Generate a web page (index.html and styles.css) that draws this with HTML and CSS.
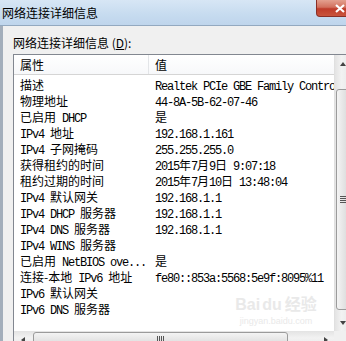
FILE: index.html
```html
<!DOCTYPE html>
<html lang="zh-CN">
<head>
  <meta charset="UTF-8">
  <title>网络连接详细信息</title>
  <link rel="stylesheet" href="styles.css">
</head>
<body>
  <div class="window">
    <div class="titlebar">
      <span class="title">网络连接详细信息</span>
      <div class="close">
        <svg width="10" height="9" viewBox="0 0 10 9"><path d="M1 1 L9 8 M9 1 L1 8" stroke="#fff" stroke-width="2.2"/></svg>
      </div>
    </div>

    <div class="client">
      <div class="label">网络连接详细信息 (<u>D</u>):</div>

      <div class="listbox">
        <div class="list-head">
          <div class="head-cell col-name">属性</div>
          <div class="head-cell col-value">值</div>
        </div>

        <div class="list-body">
          <table class="props">
            <colgroup><col class="c1"><col class="c2"></colgroup>
            <tbody>
              <tr><td><span class="zh">描述</span></td><td>Realtek PCIe GBE Family Controller</td></tr>
              <tr><td><span class="zh">物理地址</span></td><td>44-8A-5B-62-07-46</td></tr>
              <tr><td><span class="zh">已启用</span> DHCP</td><td><span class="zh">是</span></td></tr>
              <tr><td>IPv4 <span class="zh">地址</span></td><td>192.168.1.161</td></tr>
              <tr><td>IPv4 <span class="zh">子网掩码</span></td><td>255.255.255.0</td></tr>
              <tr><td><span class="zh">获得租约的时间</span></td><td>2015<span class="zh">年</span>7<span class="zh">月</span>9<span class="zh">日</span> 9:07:18</td></tr>
              <tr><td><span class="zh">租约过期的时间</span></td><td>2015<span class="zh">年</span>7<span class="zh">月</span>10<span class="zh">日</span> 13:48:04</td></tr>
              <tr><td>IPv4 <span class="zh">默认网关</span></td><td>192.168.1.1</td></tr>
              <tr><td>IPv4 DHCP <span class="zh">服务器</span></td><td>192.168.1.1</td></tr>
              <tr><td>IPv4 DNS <span class="zh">服务器</span></td><td>192.168.1.1</td></tr>
              <tr><td>IPv4 WINS <span class="zh">服务器</span></td><td></td></tr>
              <tr><td><span class="zh">已启用</span> NetBIOS ove...</td><td><span class="zh">是</span></td></tr>
              <tr><td><span class="zh">连接-本地</span> IPv6 <span class="zh">地址</span></td><td>fe80::853a:5568:5e9f:8095%11</td></tr>
              <tr><td>IPv6 <span class="zh">默认网关</span></td><td></td></tr>
              <tr><td>IPv6 DNS <span class="zh">服务器</span></td><td></td></tr>
            </tbody>
          </table>
        </div>

        <div class="vscroll">
          <div class="arrow-btn"><span class="tri tri-up"></span></div>
          <div class="thumb v-thumb"><span class="grip-v"></span></div>
          <div class="track-fill"></div>
          <div class="arrow-btn"><span class="tri tri-down"></span></div>
        </div>

        <div class="hscroll">
          <div class="arrow-btn"><span class="tri tri-left"></span></div>
          <div class="thumb h-thumb"><span class="grip-h"></span></div>
          <div class="track-fill"></div>
          <div class="arrow-btn"><span class="tri tri-right"></span></div>
        </div>
        <div class="corner"></div>

        <div class="watermark">
          <div class="wm-logo">Bai<span class="wm-du">du</span>经验</div>
          <div class="wm-url">jingyan.baidu.com</div>
        </div>
      </div>
    </div>
  </div>
</body>
</html>
```

FILE: styles.css
```css
body {
  margin: 0;
  width: 346px;
  height: 341px;
  overflow: hidden;
  background: #f0f0f0;
  font-family: "Noto Sans CJK SC", sans-serif;
  color: #000;
}
.window {
  width: 346px;
  height: 341px;
  overflow: hidden;
}

/* title bar */
.titlebar {
  position: relative;
  height: 25px;
  line-height: 25px;
  padding-left: 2px;
  font-size: 12px;
  background: linear-gradient(to bottom, #d7e6f5 0%, #c6dbef 60%, #bfd5ec 100%);
  border-bottom: 1px solid #93a9c0;
}
.close {
  position: absolute;
  top: 0;
  left: 316px;
  width: 46px;
  height: 16px;
  border: 1px solid #8a2f26;
  border-top: none;
  border-radius: 0 0 4px 4px;
  background: linear-gradient(to bottom, #e4a08f 0%, #d2705d 45%, #bf3c2a 55%, #c9553d 100%);
  display: flex;
  align-items: center;
  justify-content: center;
}

/* dialog body */
.client {
  height: 315px;
  border-left: 3px solid #a3aebb;
  padding-left: 10px;
}
.label {
  padding-top: 9px;
  height: 16px;
  line-height: 16px;
  font-size: 12px;
}
.listbox {
  position: relative;
  margin-top: 3px;
  width: 337px;
  border: 1px solid #828790;
  background: #fff;
  display: grid;
  grid-template-columns: 320px 17px;
  grid-template-rows: 20px 256px 17px;
}

/* column header */
.list-head {
  grid-column: 1;
  grid-row: 1;
  display: flex;
  border-bottom: 1px solid #d5d5d5;
  background: linear-gradient(to bottom, #ffffff, #f7f8fa);
  font-size: 12px;
  line-height: 19px;
}
.head-cell {
  padding-left: 6px;
}
.col-name {
  width: 128px;
  border-right: 1px solid #e3e5e8;
}
.col-value {
  padding-left: 6px;
  flex: 1;
}

/* rows */
.list-body {
  grid-column: 1;
  grid-row: 2;
  overflow: hidden;
  padding-top: 4px;
}
.props {
  table-layout: fixed;
  width: 320px;
  border-collapse: collapse;
  font-family: "Liberation Mono", "Noto Sans CJK SC", monospace;
  font-size: 12px;
  letter-spacing: -1.2px;
}
.props col.c1 { width: 134px; }
.props col.c2 { width: 186px; }
.props td {
  height: 16px;
  line-height: 16px;
  padding: 0 0 0 6px;
  white-space: nowrap;
}
.props td + td {
  padding-left: 7px;
}
.zh {
  font-family: "Noto Sans CJK SC", sans-serif;
  letter-spacing: 0;
  line-height: 12px;
}

/* scrollbars */
.vscroll {
  grid-column: 2;
  grid-row: 1 / 3;
  display: flex;
  flex-direction: column;
  background: linear-gradient(to right, #e3e3e3, #f2f2f2 40%, #e8e8e8);
  border-left: 1px solid #e0e0e0;
}
.hscroll {
  grid-column: 1;
  grid-row: 3;
  display: flex;
  background: linear-gradient(to bottom, #e3e3e3, #f2f2f2 40%, #e8e8e8);
}
.corner {
  grid-column: 2;
  grid-row: 3;
  background: #f0f0f0;
}
.arrow-btn {
  flex: 0 0 17px;
  display: flex;
  align-items: center;
  justify-content: center;
}
.track-fill {
  flex: 1;
}
.thumb {
  display: flex;
  align-items: center;
  justify-content: center;
  border: 1px solid #9b9b9b;
  border-radius: 3px;
}
.v-thumb {
  margin: 17px 1px 0;
  height: 219px;
  background: linear-gradient(to right, #f4f4f4, #e6e6e6 50%, #d8d8d8);
}
.h-thumb {
  margin: 1px 0 1px 2px;
  width: 253px;
  background: linear-gradient(to bottom, #f4f4f4, #e6e6e6 50%, #d8d8d8);
}
.grip-v {
  width: 7px;
  height: 7px;
  background: repeating-linear-gradient(to bottom, #555 0 1px, transparent 1px 2px);
}
.grip-h {
  width: 7px;
  height: 7px;
  background: repeating-linear-gradient(to right, #555 0 1px, transparent 1px 2px);
}
.tri {
  width: 0;
  height: 0;
  border: 3px solid transparent;
}
.tri-up { border-bottom: 4px solid #444; border-top: none; }
.tri-down { border-top: 4px solid #444; border-bottom: none; }
.tri-left { border-right: 4px solid #444; border-left: none; }
.tri-right { border-left: 4px solid #444; border-right: none; }

/* faint watermark over the empty part of the list */
.watermark {
  position: absolute;
  left: 218px;
  top: 240px;
  width: 88px;
  color: #e9e9e9;
  text-align: center;
  pointer-events: none;
}
.wm-logo {
  font-family: "Liberation Sans", "Noto Sans CJK SC", sans-serif;
  font-size: 16px;
  font-weight: bold;
  line-height: 20px;
}
.wm-du {
  margin: 0 3px 0 2px;
}
.wm-url {
  font-family: "Liberation Sans", sans-serif;
  font-size: 9px;
  line-height: 12px;
}
```
